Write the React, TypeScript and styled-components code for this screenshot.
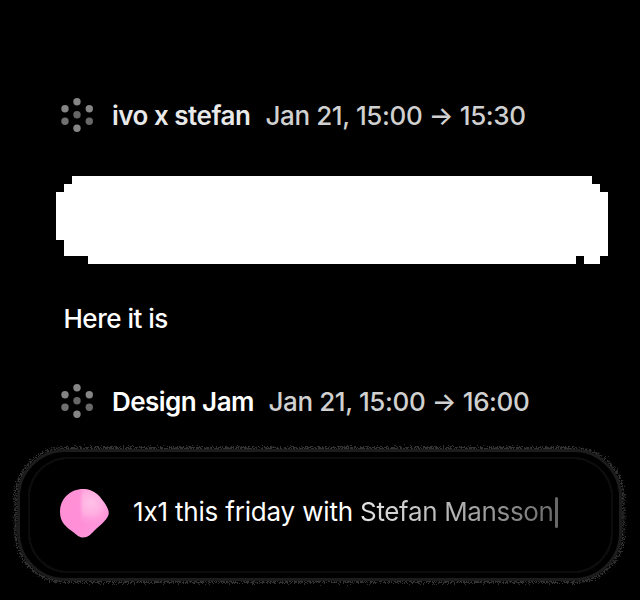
import React from 'react';
import styled, { createGlobalStyle } from 'styled-components';

const GlobalStyle = createGlobalStyle`
  * { box-sizing: border-box; }
  html, body { margin: 0; background: #000; overflow: hidden; }
`;

const Screen = styled.main`
  width: 640px;
  height: 600px;
  overflow: hidden;
  background: #000;
  color: #fff;
  display: flex;
  flex-direction: column;
  font-family: Inter, sans-serif;
  font-size: 26px;
  line-height: 32px;
  white-space: nowrap;
`;

const Thread = styled.section`
  display: flex;
  flex-direction: column;
  padding: 97px 0 0 56px;
`;

const EventRow = styled.div<{ $gap?: number }>`
  display: flex;
  align-items: center;
  height: 38px;
  margin-top: ${({ $gap = 0 }) => $gap}px;
`;

const DotIcon = styled.svg`
  width: 42px;
  height: 38px;
  flex: none;
`;

const EventTitle = styled.strong<{ $width: number; $spacing: number; $color: string }>`
  width: ${({ $width }) => $width}px;
  margin-left: 14px;
  font-weight: 600;
  letter-spacing: ${({ $spacing }) => $spacing}px;
  color: ${({ $color }) => $color};
`;

const EventTime = styled.time`
  color: #d0d0d0;
  font-weight: 500;
  letter-spacing: -0.4px;
`;

const Redacted = styled.div`
  width: 552px;
  height: 88px;
  margin-top: 41px;
  background: #fff;
  clip-path: polygon(
    16px 0, 536px 0, 536px 8px, 544px 8px, 544px 16px, 552px 16px,
    552px 80px, 544px 80px, 544px 88px, 528px 88px, 528px 80px, 520px 80px,
    520px 88px, 32px 88px, 32px 80px, 8px 80px, 8px 64px, 0 64px,
    0 16px, 8px 16px, 8px 8px, 16px 8px
  );
`;

const Message = styled.p`
  margin: 39px 0 0 7.5px;
  font-weight: 500;
  letter-spacing: -0.5px;
`;

const Composer = styled.section`
  position: relative;
  isolation: isolate;
  height: 144px;
  margin: 23px 12px 0;
  padding: 0 0 8px 46px;
  display: flex;
  align-items: center;
`;

const ComposerEdge = styled.svg`
  position: absolute;
  z-index: -1;
  inset: 0;
  width: 616px;
  height: 144px;
  pointer-events: none;
`;

const Orb = styled.svg`
  width: 52px;
  height: 52px;
  margin-top: 1px;
  flex: none;
`;

const Typed = styled.span`
  margin-left: 23px;
  letter-spacing: -0.18px;
  white-space: pre;
`;

const Suggestion = styled.span`
  letter-spacing: -0.35px;
  color: transparent;
  background: linear-gradient(90deg, #e4e4e4, #b2b2b2 50%, #6c6c6c);
  background-clip: text;
`;

const Caret = styled.span`
  width: 3px;
  height: 31px;
  margin-left: 1px;
  border-radius: 2px;
  background: #686868;
`;

const dots = [
  [21, 4.8, '#858585'], [9, 11.8, '#858585'], [33.3, 11.8, '#858585'],
  [21, 17.8, '#666'], [9, 24.2, '#707070'], [33.3, 24.2, '#686868'],
  [21, 31.2, '#858585'],
] as const;

function Dots() {
  return (
    <DotIcon viewBox="0 0 42 38" aria-hidden>
      {dots.map(([x, y, fill]) => <circle key={`${x}-${y}`} cx={x} cy={y} r={3.7} fill={fill} />)}
    </DotIcon>
  );
}

function Edge() {
  return (
    <ComposerEdge viewBox="0 0 616 144" aria-hidden>
      <defs>
        <filter id="grain" x="-3%" y="-8%" width="106%" height="116%">
          <feTurbulence type="fractalNoise" baseFrequency="0.8" numOctaves="2" seed="8" result="noise" />
          <feDisplacementMap in="SourceGraphic" in2="noise" scale="9" xChannelSelector="R" yChannelSelector="G" />
        </filter>
        <filter id="haze"><feGaussianBlur stdDeviation="0.7" /></filter>
        <filter id="soft"><feGaussianBlur stdDeviation="1.4" /></filter>
      </defs>
      <rect x="3.5" y="4" width="608" height="134" rx="50" fill="none" stroke="#303030" strokeWidth="2.2" filter="url(#grain)" />
      <rect x="6.5" y="6.5" width="602" height="129" rx="47" fill="none" stroke="#1b1b1b" strokeWidth="3" filter="url(#haze)" />
      <rect x="17" y="14" width="583" height="114" rx="39" fill="none" stroke="#080808" strokeWidth="3" filter="url(#soft)" />
    </ComposerEdge>
  );
}

function AssistantOrb() {
  return (
    <Orb viewBox="0 0 52 52" aria-hidden>
      <defs>
        <linearGradient id="pink" x1="0" y1="0" x2="1" y2="1">
          <stop stopColor="#ff91d4" /><stop offset=".6" stopColor="#ff8fd8" /><stop offset="1" stopColor="#ffa0de" />
        </linearGradient>
        <radialGradient id="shine" gradientUnits="userSpaceOnUse" cx="33" cy="16" r="25">
          <stop stopColor="#ffc2e8" /><stop offset=".45" stopColor="#ffb4e2" stopOpacity=".85" /><stop offset="1" stopColor="#ff92d9" stopOpacity="0" />
        </radialGradient>
        <linearGradient id="fold" gradientUnits="userSpaceOnUse" x1="21" y1="0" x2="25" y2="0">
          <stop stopColor="#000" /><stop offset="1" stopColor="#fff" />
        </linearGradient>
        <mask id="foldMask"><rect width="52" height="52" fill="url(#fold)" /></mask>
        <clipPath id="orb"><path d="M25 2C12 2 2 12 2 25C2 35 8 40 15 45C19 48 21 50.5 25 50.5C30 50.5 33 47 36 44C40 40 43 38 46.5 34C49 31 50.7 29 50.7 26C50.7 21 46 15 41.5 9.5C37 4.5 31 2 25 2Z" /></clipPath>
      </defs>
      <g clipPath="url(#orb)">
        <rect width="52" height="52" fill="url(#pink)" />
        <rect width="52" height="52" fill="url(#shine)" mask="url(#foldMask)" />
      </g>
    </Orb>
  );
}

export default function App() {
  return (
    <>
      <GlobalStyle />
      <Screen>
        <Thread>
          <EventRow>
            <Dots />
            <EventTitle $width={153.5} $spacing={-0.5} $color="#e9e9e9">ivo x stefan</EventTitle>
            <EventTime>Jan 21, 15:00 → 15:30</EventTime>
          </EventRow>
          <Redacted />
          <Message>Here it is</Message>
          <EventRow $gap={48}>
            <Dots />
            <EventTitle $width={156.5} $spacing={-0.55} $color="#fff">Design Jam</EventTitle>
            <EventTime>Jan 21, 15:00 → 16:00</EventTime>
          </EventRow>
        </Thread>
        <Composer>
          <Edge />
          <AssistantOrb />
          <Typed>{'1x1 this friday with '}</Typed>
          <Suggestion>Stefan Mansson</Suggestion>
          <Caret />
        </Composer>
      </Screen>
    </>
  );
}
